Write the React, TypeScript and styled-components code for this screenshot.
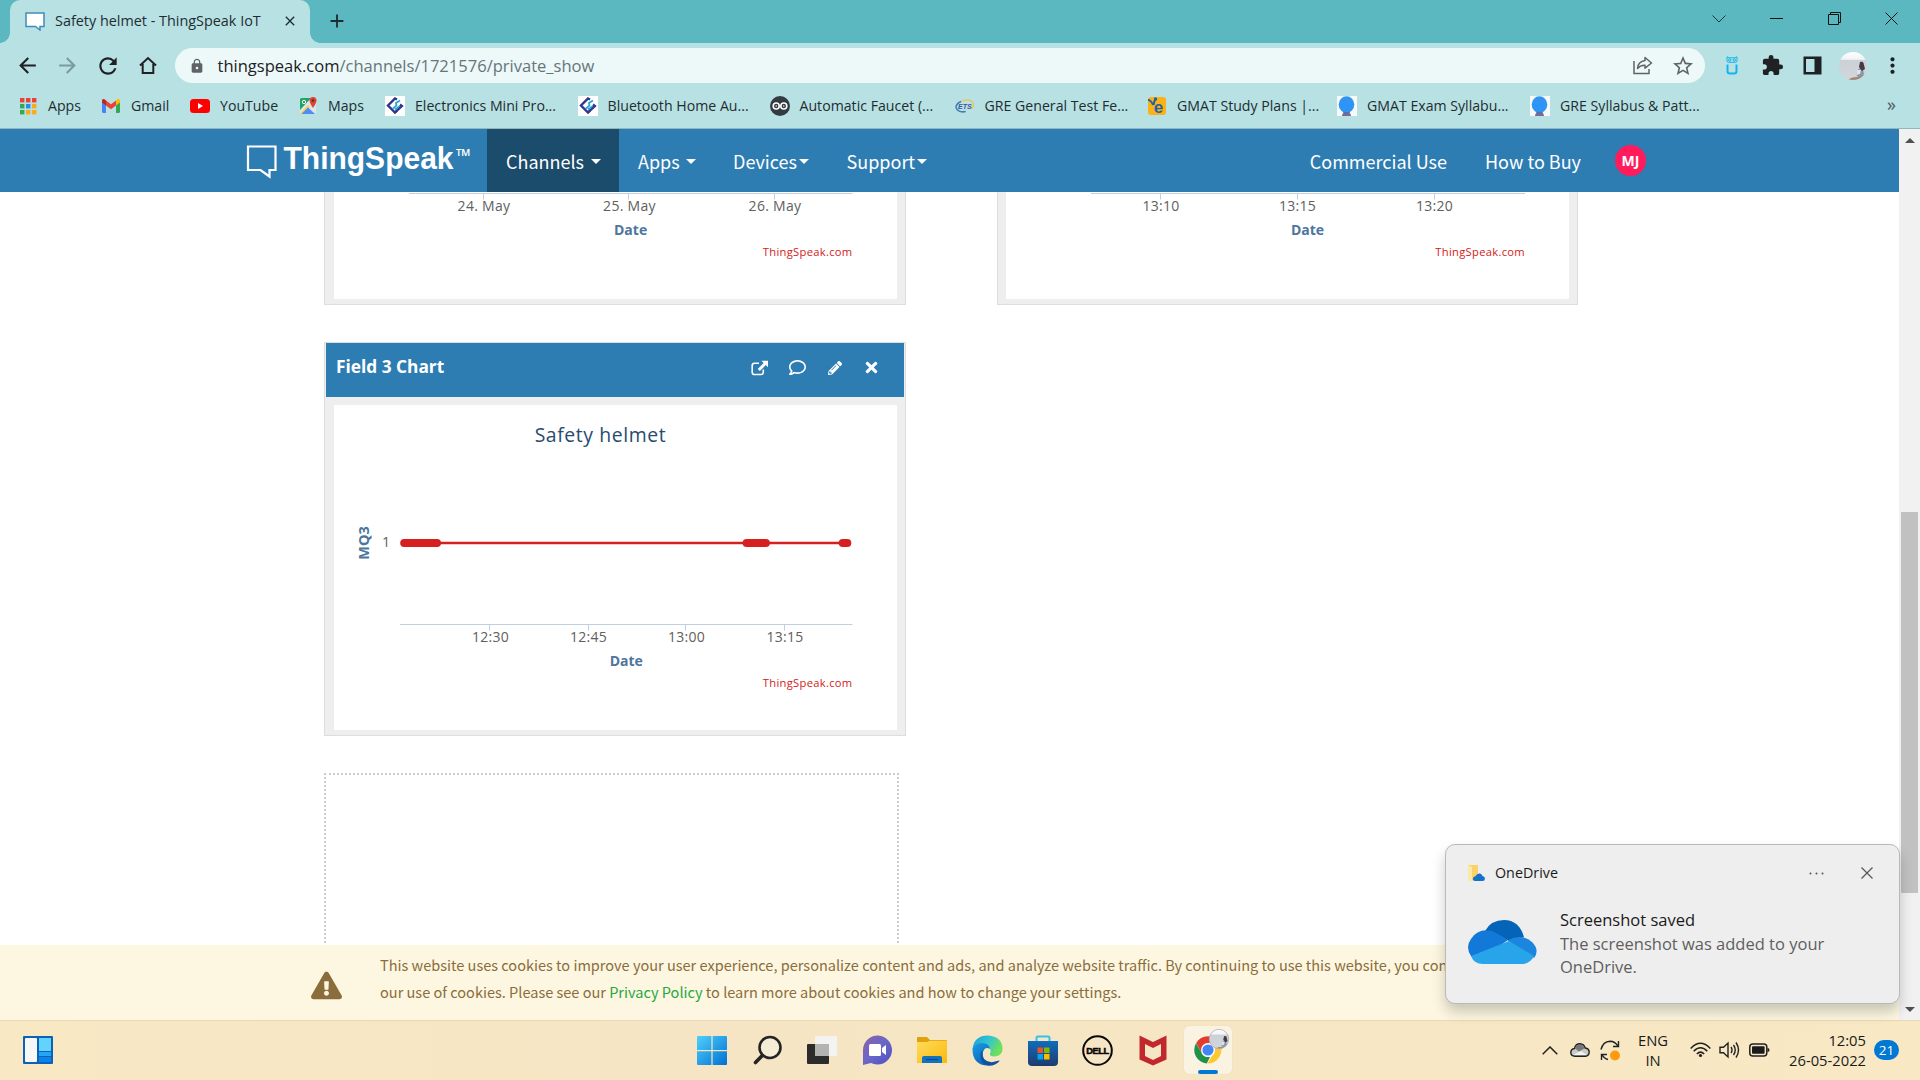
import React from "react";
import styled, { createGlobalStyle, css } from "styled-components";
import { MdArrowBack, MdArrowForward, MdExtension, MdLock, MdMoreVert, MdRefresh, MdStarBorder, MdClose, MdAdd } from "react-icons/md";
import { FaPencilAlt, FaRegComment, FaTimes, FaExclamationTriangle } from "react-icons/fa";

const ui = `"Segoe UI", "Open Sans", "Noto Sans", sans-serif`;
const site = `"Source Sans Pro", "Noto Sans CJK SC", sans-serif`;
const chartFont = `"Open Sans", "Noto Sans", sans-serif`;

const GlobalStyle = createGlobalStyle`
  * { box-sizing: border-box; }
  body { margin: 0; background: #fff; overflow: hidden; font-family: ${ui}; }
  svg { display: block; flex: none; }
`;

const Screen = styled.div`
  position: relative;
  display: flex;
  flex-direction: column;
  width: 1920px;
  height: 1080px;
  overflow: hidden;
`;

/* ---------- browser frame ---------- */

const TabStrip = styled.header`
  display: flex;
  align-items: flex-start;
  height: 43px;
  padding-left: 10px;
  background: #5bb8c1;
`;

const Tab = styled.div`
  position: relative;
  display: flex;
  align-items: center;
  width: 300px;
  height: 43px;
  padding: 0 12px 1px 15px;
  border-radius: 10px 10px 0 0;
  background: #b8e1e4;
  color: #1f2d30;
  &::before,
  &::after {
    content: "";
    position: absolute;
    bottom: 0;
    width: 10px;
    height: 10px;
  }
  &::before {
    left: -10px;
    background: radial-gradient(circle at 0 0, transparent 9.5px, #b8e1e4 10px);
  }
  &::after {
    right: -10px;
    background: radial-gradient(circle at 100% 0, transparent 9.5px, #b8e1e4 10px);
  }
`;

const TabTitle = styled.span`
  flex: 1;
  padding-left: 10px;
  font-size: 14.4px;
  line-height: 20px;
  white-space: nowrap;
`;

const NewTab = styled.div`
  display: flex;
  align-items: center;
  height: 42px;
  margin-left: 16px;
  color: #1c2d30;
`;

const WindowButtons = styled.div`
  display: flex;
  margin-left: auto;
  height: 37px;
`;

const WindowButton = styled.div`
  display: grid;
  place-items: center;
  width: 57.3px;
`;

const Toolbar = styled.div`
  display: flex;
  align-items: center;
  height: 45px;
  padding: 0 0 0 14px;
  background: #b8e1e4;
  color: #202124;
`;

const ToolButton = styled.div<{ $w: number; $faded?: boolean }>`
  display: grid;
  place-items: center;
  width: ${(p) => p.$w}px;
  ${(p) => p.$faded && css`color: #7c9a9e;`}
`;

const AddressBar = styled.div`
  display: flex;
  align-items: center;
  width: 1530px;
  height: 35px;
  margin-left: 1px;
  padding: 0 1px 0 14px;
  border-radius: 18px;
  background: #edf8f8;
  color: #5f6368;
`;

const Url = styled.span`
  flex: 1;
  padding-left: 12.5px;
  font-size: 16.55px;
  line-height: 24px;
  color: #66757a;
  b { font-weight: 400; color: #202124; }
`;

const Bookmarks = styled.nav`
  display: flex;
  align-items: center;
  height: 41px;
  padding: 0 24px 5px 18px;
  border-bottom: 1px solid #93b6b9;
  background: #b8e1e4;
`;

const Bookmark = styled.div<{ $w: number }>`
  display: flex;
  align-items: center;
  gap: 10px;
  flex: none;
  width: ${(p) => p.$w}px;
  font-size: 14.15px;
  line-height: 20px;
  white-space: nowrap;
  color: #1f2d30;
`;

const MoreBookmarks = styled.span`
  margin-left: auto;
  padding-bottom: 4px;
  font-size: 18px;
  line-height: 20px;
  color: #4a5b5e;
`;

/* ---------- web page ---------- */

const Viewport = styled.div`
  display: flex;
  height: 891px;
`;

const Page = styled.div`
  display: flex;
  flex-direction: column;
  width: 1899px;
  height: 891px;
  background: #fff;
`;

const NavBar = styled.nav`
  display: flex;
  align-items: stretch;
  height: 63px;
  padding-left: 245px;
  background: #2e7db2;
  color: #fff;
  font-family: ${site};
  font-size: 18px;
`;

const Brand = styled.div`
  display: flex;
  align-items: center;
  width: 242px;
`;

const NavItem = styled.div<{ $w: number; $gap?: number; $active?: boolean }>`
  display: flex;
  align-items: center;
  gap: ${(p) => p.$gap ?? 2}px;
  width: ${(p) => p.$w}px;
  padding-left: 19px;
  line-height: 26px;
  white-space: nowrap;
  background: ${(p) => (p.$active ? "#1c4c6b" : "transparent")};
`;

const Caret = styled.i`
  margin-top: 2px;
  border: 5px solid transparent;
  border-top-color: #fff;
  border-bottom: 0;
`;

const NavRight = styled.div`
  display: flex;
  align-items: center;
  margin-left: auto;
  padding-right: 253px;
`;

const NavLink = styled.span`
  margin-right: 38px;
  line-height: 26px;
  white-space: nowrap;
`;

const Initials = styled.span`
  display: grid;
  place-items: center;
  width: 31px;
  height: 31px;
  margin-left: -4px;
  border-radius: 50%;
  background: #ff1b5c;
  font: 700 14px/20px ${ui};
`;

const Content = styled.main`
  flex: 1;
  min-height: 0;
  overflow: hidden;
  padding-left: 324px;
`;

const CardRow = styled.div<{ $h?: number }>`
  display: flex;
  align-items: flex-end;
  gap: 91px;
  height: ${(p) => p.$h ?? 394}px;
  margin-bottom: 37px;
  overflow: hidden;
`;

const Card = styled.section<{ $w?: number }>`
  flex: none;
  display: flex;
  flex-direction: column;
  width: ${(p) => p.$w ?? 582}px;
  height: 394px;
  border: 1px solid #ddd;
  background: #eee;
`;

const CardHeader = styled.div`
  display: flex;
  align-items: center;
  height: 54px;
  margin: 0 1px;
  padding: 0 24px 5px 10px;
  background: #2e7db2;
  color: #fff;
`;

const CardTitle = styled.h3`
  flex: 1;
  margin: 0;
  padding-bottom: 1px;
  font: 700 17.3px/24px ${chartFont};
`;

const CardActions = styled.div`
  display: flex;
  align-items: center;
  gap: 21.5px;
`;

const ChartArea = styled.div<{ $left?: number }>`
  height: 325px;
  margin: 8px 8px 5px ${(p) => p.$left ?? 9}px;
  background: #fff;
`;

const DropZone = styled.div`
  width: 575px;
  height: 394px;
  border: 2px dotted #ccc;
`;

const CookieBar = styled.footer`
  display: flex;
  align-items: center;
  height: 75px;
  padding: 0 0 9px 312px;
  overflow: hidden;
  background: #fdf7e2;
  color: #8a6d3b;
  font: 14.54px/27px ${site};
`;

const CookieText = styled.p`
  margin: 0 0 0 37px;
  white-space: nowrap;
  a { color: #27a844; }
`;

const CookieMark = styled.div`
  margin: 14px 1px 0 -1px;
`;

const ScrollBar = styled.div`
  display: flex;
  flex-direction: column;
  align-items: center;
  justify-content: space-between;
  width: 21px;
  padding: 9px 0 8px;
  background: #f1f1f1;
`;

const ScrollTrack = styled.div`
  flex: 1;
  padding-top: 369px;
`;

const Thumb = styled.div`
  width: 17px;
  height: 381px;
  background: #c1c1c1;
`;

const Arrow = styled.i<{ $up?: boolean }>`
  border: 5px solid transparent;
  ${(p) => (p.$up ? "border-bottom-color: #505050; border-top: 0;" : "border-top-color: #505050; border-bottom: 0;")}
`;

/* ---------- notification ---------- */

const Toast = styled.aside`
  position: absolute;
  left: 1445px;
  top: 844px;
  width: 455px;
  height: 160px;
  padding: 16px 26px 0 22px;
  border: 1px solid #b9b9b5;
  border-radius: 10px;
  background: #eee;
  box-shadow: 0 8px 14px rgba(0, 0, 0, 0.2);
`;

const ToastHead = styled.div`
  display: flex;
  align-items: center;
  height: 24px;
  font-size: 14.3px;
  color: #1a1a1a;
`;

const ToastApp = styled.span`
  flex: 1;
  padding: 0 0 2px 10px;
`;

const ToastDots = styled.span`
  margin-right: 37px;
`;

const ToastBody = styled.div`
  display: flex;
  gap: 23px;
  margin-top: 23px;
  font-size: 16.5px;
  line-height: 23.6px;
  color: #5f5f5f;
  strong { display: block; font-weight: 400; color: #1a1a1a; }
`;

const CloudBox = styled.div`
  padding-top: 12px;
`;

/* ---------- taskbar ---------- */

const TaskBar = styled.footer`
  display: grid;
  grid-template-columns: 1fr auto 1fr;
  align-items: center;
  height: 60px;
  background: linear-gradient(90deg, #f8e8c4, #f5e5c4 35%, #f7e6c3 65%, #f8e8c4);
  box-shadow: inset 0 1px 0 #e8d8b6;
`;

const TaskLeft = styled.div`
  padding-left: 23px;
`;

const TaskApps = styled.div`
  display: flex;
`;

const TaskApp = styled.div<{ $active?: boolean }>`
  display: grid;
  place-items: center;
  width: 48px;
  height: 48px;
  margin: 0 3.6px;
  border-radius: 5px;
  ${(p) => p.$active && css`background: #fbf3e2; box-shadow: 0 0 1px #d9cba8;`}
`;

const Tray = styled.div`
  display: flex;
  align-items: center;
  justify-content: flex-end;
  padding-right: 21px;
  font-size: 14.75px;
  line-height: 20px;
  color: #1a1a1a;
`;

const TrayIcon = styled.div<{ $w?: number }>`
  display: grid;
  place-items: center;
  width: ${(p) => p.$w ?? 30}px;
`;

const Language = styled.div`
  width: 61px;
  padding-right: 5px;
  text-align: center;
`;

const Clock = styled.div`
  width: 92px;
  text-align: right;
`;

const Count = styled.span`
  display: grid;
  place-items: center;
  width: 25px;
  height: 20px;
  margin-left: 8px;
  border-radius: 10px;
  background: #0078d4;
  color: #fff;
  font-size: 13.5px;
`;

/* ---------- drawings ---------- */

const Favicon = () => (
  <svg width="20" height="19" viewBox="0 0 20 19">
    <path d="M1 1h18v13.500h-4v3.500l-4.500-3.500H1z" fill="#fff" stroke="#3f8cbd" strokeWidth="1.500" />
  </svg>
);

const Logo = () => (
  <svg width="230" height="40" viewBox="0 0 230 40">
    <path d="M3 5.500h27.500v23.500h-6v6.500l-9-6.500H3z" fill="none" stroke="#fff" strokeWidth="2.200" />
    <text x="38.500" y="28" textLength="170" lengthAdjust="spacingAndGlyphs" fill="#fff" fontFamily="Liberation Sans, Arial, sans-serif" fontWeight="700" fontSize="31.500">ThingSpeak</text>
    <text x="211" y="22" fill="#fff" fontFamily="Open Sans, sans-serif" fontSize="20">™</text>
  </svg>
);

const HomeIcon = () => (
  <svg width="18" height="19" viewBox="0 0 18 19" fill="none" stroke="currentColor" strokeWidth="2">
    <path d="M1 9.500 9 2l8 7.500M3.700 8v9h10.600V8" />
  </svg>
);

const ShareIcon = () => (
  <svg width="20" height="19" viewBox="0 0 20 19" fill="none" stroke="currentColor" strokeWidth="1.500">
    <path d="M1 5v12.500h15V13" />
    <path d="M12 1.500 18.500 7 12 12.200V9.300c-3.300-.2-5.600.8-7.500 3.200.4-4.500 3-7.300 7.500-7.900z" strokeLinejoin="round" />
  </svg>
);

const OwlIcon = () => (
  <svg width="12" height="19" viewBox="0 0 12 19" fill="none" stroke="#12b5ea" strokeWidth="1.600">
    <path d="M1.500 8.500V15q0 2.500 2.500 2.500h4q2.500 0 2.500-2.500V8.500" strokeWidth="2" />
    <path d="M1 .8l2 1h6l2-1v4q0 1.500-1.500 1.500h-7Q1 6.300 1 4.800z" strokeWidth="1" />
    <circle cx="3.700" cy="4" r="1.200" strokeWidth="1" /><circle cx="8.300" cy="4" r="1.200" strokeWidth="1" />
  </svg>
);

const SidePanelIcon = () => (
  <svg width="19" height="19" viewBox="0 0 19 19"><path fillRule="evenodd" d="M.5.500h18v18H.5zM3 3v13h8.500V3z" fill="#202124" /></svg>
);

const ProfilePhoto = ({ size }: { size: number }) => (
  <svg width={size} height={size} viewBox="0 0 28 28">
    <defs>
      <clipPath id="photo"><circle cx="14" cy="14" r="14" /></clipPath>
      <linearGradient id="sky" x2="0" y2="1"><stop stopColor="#fff" /><stop offset=".26" stopColor="#f2f3f5" /><stop offset=".3" stopColor="#ccd0d7" /><stop offset="1" stopColor="#d3d6dc" /></linearGradient>
    </defs>
    <g clipPath="url(#photo)">
      <rect width="28" height="28" fill="url(#sky)" />
      <path d="M9 28q3-3 9-3l10-4v9z" fill="#a3866e" />
      <path d="M17 23q0-5 4-7l3 2 1 4-5 3z" fill="#8795ad" />
      <path d="M21 10q2.500-1 3.500 1l1.500 6-3 2-3-4z" fill="#463a40" />
      <path d="M18 18l4 0-1 4-4 1z" fill="#dfe5ec" />
    </g>
  </svg>
);

const AppsGrid = () => (
  <svg width="20" height="20" viewBox="0 0 20 20">
    {["#ea4335", "#ea4335", "#ea4335", "#34a853", "#2b8cf0", "#fbab19", "#34a853", "#fbab19", "#fbab19"].map((c, i) => (
      <rect key={i} x={2 + (i % 3) * 6} y={2 + Math.floor(i / 3) * 6} width="4.400" height="4.400" fill={c} />
    ))}
  </svg>
);

const GmailIcon = () => (
  <svg width="20" height="20" viewBox="0 0 20 20">
    <path d="M1 5v10.500q0 1.500 1.500 1.500H5V8.500z" fill="#4285f4" />
    <path d="M19 5v10.500q0 1.500-1.500 1.500H15V8.500z" fill="#34a853" />
    <path d="M15 4.500V9.500l4-3V5q0-3-2.500-1.700z" fill="#fbbc04" />
    <path d="M1 5v1.500l4 3V4.500L3.500 3.300Q1 2 1 5z" fill="#c5221f" />
    <path d="M5 4.500v5l5 3.700 5-3.700v-5l-5 3.700z" fill="#ea4335" />
  </svg>
);

const YouTubeIcon = () => (
  <svg width="20" height="20" viewBox="0 0 20 20">
    <rect y="3" width="20" height="14" rx="3.500" fill="#f00" /><path d="M8 7v6l5-3z" fill="#fff" />
  </svg>
);

const MapsIcon = () => (
  <svg width="20" height="20" viewBox="0 0 20 20">
    <rect x="2" y="2" width="16" height="16" rx="1.500" fill="#dfe6ea" />
    <path d="M3.500 2H13L2 14V3.500Q2 2 3.500 2z" fill="#1fa463" />
    <path d="M2 17.500 10 9l2 2-8 7z" fill="#fdd049" />
    <path d="M3.500 18 10 11.500 17 18z" fill="#4c8df6" />
    <path d="M15 1q-3.500 0-3.500 3.600Q11.500 7 15 12q3.500-5 3.500-7.400Q18.500 1 15 1z" fill="#db4437" />
    <circle cx="15" cy="4.600" r="1.300" fill="#7b231e" />
    <circle cx="6" cy="6" r="1.700" fill="none" stroke="#fff" />
  </svg>
);

const ElectronicsIcon = () => (
  <svg width="20" height="20" viewBox="0 0 20 20">
    <rect width="20" height="20" fill="#fff" />
    <path d="M12 3.500 10 2.500 3 9.500l7 7 2.500-2.500" fill="none" stroke="#30368c" strokeWidth="2.400" />
    <path d="M8 12.500l3.500-3L11 7l4-2.500M10 13.500 15 10" fill="none" stroke="#27a9d5" strokeWidth="1.800" />
    <path d="M10 16.500 17 10l-2-1.500" fill="none" stroke="#30368c" strokeWidth="2.200" />
  </svg>
);

const ArduinoIcon = () => (
  <svg width="20" height="20" viewBox="0 0 20 20">
    <circle cx="10" cy="10" r="10" fill="#323b40" />
    <circle cx="6.200" cy="10" r="3" fill="none" stroke="#fff" strokeWidth="1.600" /><circle cx="13.800" cy="10" r="3" fill="none" stroke="#fff" strokeWidth="1.600" />
    <circle cx="6.200" cy="10" r=".8" fill="#fff" /><circle cx="13.800" cy="10" r=".8" fill="#fff" />
  </svg>
);

const EtsIcon = () => (
  <svg width="20" height="20" viewBox="0 0 20 20">
    <ellipse cx="10" cy="10.500" rx="9" ry="5.800" fill="#c3dde6" />
    <path d="M6 5.500Q16 1.500 18.500 8q.5 3-3 5" fill="none" stroke="#e5c65b" strokeWidth="1.300" />
    <path d="M6 5.500Q.5 8 1.200 12q2.500 5 9.500 3.500" fill="none" stroke="#3c80b5" strokeWidth="1.600" />
    <text x="9.800" y="13" fontSize="7" fontWeight="700" fontStyle="italic" textAnchor="middle" fill="#255e9b" fontFamily="Liberation Sans, sans-serif">ETS</text>
  </svg>
);

const StudyIcon = () => (
  <svg width="20" height="20" viewBox="0 0 20 20">
    <rect x="1" y="1" width="18" height="18" rx="3" fill="#fbb216" />
    <text x="11.500" y="16.500" fontSize="17" fontWeight="700" textAnchor="middle" fill="#1f62a8" fontFamily="Liberation Sans, sans-serif">e</text>
    <path d="M1 4q3 0 5 5M7 9q-1-3 2-6" stroke="#1f62a8" strokeWidth="1.800" fill="none" /><circle cx="8.500" cy="3" r="1.700" fill="#1f62a8" />
  </svg>
);

const GlobeIcon = () => (
  <svg width="20" height="20" viewBox="0 0 20 20">
    <rect width="20" height="20" fill="#f7f8f8" />
    <path d="M5 20q0-3.500 4.500-4 4.500.5 4.500 4z" fill="#796b93" />
    <ellipse cx="9.500" cy="8.500" rx="7.800" ry="8.200" fill="#2f95f5" /><path d="M5 15q5 2.500 9 0l-2 2.500H7z" fill="#4574b6" />
  </svg>
);

const OpenIcon = () => (
  <svg width="17" height="16" viewBox="0 0 17 16">
    <path d="M8 3.200H3.500Q1.200 3.200 1.200 5.500v6.700q0 2.300 2.300 2.300H10q2.300 0 2.300-2.300V9.500" fill="none" stroke="#fff" strokeWidth="1.600" />
    <path d="M10.500.800H17v6.500l-2.200-2.200-6 6L6.700 9l6-6z" fill="#fff" />
  </svg>
);

const OneDriveCloud = ({ w }: { w: number }) => (
  <svg width={w} height={w * 0.667} viewBox="0 0 69 46">
    <path d="M17 11Q23 0 36 0q15 0 20 17L42 21z" fill="#0364b8" />
    <path d="M3 36Q-3 27 3 19q7-11 21-8 5 2 16 9L20 34 4 37z" fill="#1379d8" />
    <path d="M40 20q14-7 24 2 8 8 2 16L40 21z" fill="#1c86df" />
    <path d="M3 36 41 21l25 15q-4 8-12 8H15Q6 44 3 36z" fill="#28a4ea" />
  </svg>
);

const FolderCloud = () => (
  <svg width="17" height="17" viewBox="0 0 17 17">
    <path d="M0 0h10v14l-7 2-3-1z" fill="#f8d36a" /><path d="M0 0l4 2v15l-4-2z" fill="#fde9a6" />
    <path d="M7 16q-2.500-.5-2-3 .5-1.700 2.500-1.800Q9 8 12 8.500q2 .5 2.600 2.500 2.400.5 2.400 2.500T15 16z" fill="#1272cc" />
  </svg>
);

const WidgetsIcon = () => (
  <svg width="30" height="28" viewBox="0 0 30 28">
    <rect width="30" height="28" rx="1" fill="#0d62b8" /><rect x="2" y="2" width="12" height="24" rx="1" fill="#f7f7f7" />
    <rect x="16" y="2" width="12" height="13" fill="#62d3fb" /><rect x="16" y="16" width="12" height="4" fill="#23a6f6" /><rect x="16" y="21" width="12" height="5" fill="#0a84e8" />
  </svg>
);

const WindowsIcon = () => (
  <svg width="30" height="30" viewBox="0 0 30 30">
    <defs><linearGradient id="win" x2="1" y2="1"><stop stopColor="#50d0fb" /><stop offset="1" stopColor="#0070d2" /></linearGradient></defs>
    <path d="M0 2q0-1 1-1h13.400v14H0zM15.600 1H29q1 0 1 1v13H15.600zM0 16.200h14.400V30H1q-1 0-1-1zM15.600 16.200H30V29q0 1-1 1H15.600z" fill="url(#win)" />
  </svg>
);

const SearchIcon = () => (
  <svg width="30" height="30" viewBox="0 0 30 30" fill="none" stroke="#252525">
    <circle cx="18" cy="12.500" r="10.500" strokeWidth="2.600" fill="#f5ecd6" /><path d="M10.300 20.500 3.500 27.500" strokeWidth="3.600" strokeLinecap="round" />
  </svg>
);

const TaskViewIcon = () => (
  <svg width="30" height="30" viewBox="0 0 30 30">
    <rect y="9" width="22" height="20" rx="1" fill="#2c2c2a" /><rect x="8" y="1" width="22" height="20" rx="1" fill="#f3f3f3" /><rect x="8" y="9" width="14" height="12" fill="#b3b3b1" />
  </svg>
);

const ChatIcon = () => (
  <svg width="30" height="30" viewBox="0 0 30 30">
    <defs><linearGradient id="chat" x2="1" y2="1"><stop stopColor="#8b64a8" /><stop offset=".5" stopColor="#6a66c8" /><stop offset="1" stopColor="#4f4fc4" /></linearGradient></defs>
    <path d="M1 30V15A14.500 14.500 0 1 1 9 28z" fill="url(#chat)" /><rect x="7" y="9" width="12" height="12" rx="1.500" fill="#fff" /><path d="M20 13l4-3v10l-4-3z" fill="#fff" />
  </svg>
);

const FolderIcon = () => (
  <svg width="30" height="30" viewBox="0 0 30 30">
    <defs><linearGradient id="fold" x2="1" y2="1"><stop stopColor="#ffdc5e" /><stop offset="1" stopColor="#fbb80c" /></linearGradient></defs>
    <path d="M0 3q0-1 1-1h9l3 3h16q1 0 1 1v5H0z" fill="#e2a10c" /><path d="M0 7h10l3-1.200h17v22.200H0z" fill="url(#fold)" />
    <path d="M5 28v-5q0-2 2-2h16q2 0 2 2v5z" fill="#1272bd" /><path d="M9 24.500h12" stroke="#0a4c8b" strokeWidth="1.200" />
  </svg>
);

const EdgeIcon = () => (
  <svg width="31" height="31" viewBox="0 0 31 31">
    <defs>
      <linearGradient id="edge" x2="1" y2=".4"><stop stopColor="#1b9fdd" /><stop offset=".55" stopColor="#32c5cf" /><stop offset="1" stopColor="#6fe05a" /></linearGradient>
      <linearGradient id="edge2" x2=".6" y2="1"><stop stopColor="#1b9ee4" /><stop offset="1" stopColor="#0a63be" /></linearGradient>
    </defs>
    <path d="M.5 14Q2 .5 16 .5q14 1 14.500 13 0 7-7.500 8-6 0-5-3 2-4-2-7Q8 8 .5 14z" fill="url(#edge)" />
    <path d="M.5 14Q3 8 10 8q7 0 8 6-5-3-7 3-1 8 6 13.400Q.5 31 .5 14z" fill="url(#edge2)" />
    <path d="M12 14q-4 5 0 10 5 5 13 2 3-1 2.500 0-4 5-11 4.800Q8 28 8.500 20 9 16 12 14z" fill="#124f9d" />
  </svg>
);

const StoreIcon = () => (
  <svg width="30" height="31" viewBox="0 0 30 31">
    <defs><linearGradient id="shop" x2="0" y2="1"><stop stopColor="#0f6cbd" /><stop offset="1" stopColor="#1f3b6d" /></linearGradient></defs>
    <path d="M8.500 7V3q0-1.500 1.500-1.500h10q1.500 0 1.500 1.500v4" fill="none" stroke="#2fc3ef" strokeWidth="2" />
    <path d="M0 6h30v21q0 4-4 4H4q-4 0-4-4z" fill="url(#shop)" />
    <path d="M9.500 12.500H15V18H9.500z" fill="#f25022" /><path d="M16 12.500h5.500V18H16z" fill="#7fba00" /><path d="M9.500 19H15v5.500H9.500z" fill="#00a4ef" /><path d="M16 19h5.500v5.500H16z" fill="#ffb900" />
  </svg>
);

const DellIcon = () => (
  <svg width="31" height="31" viewBox="0 0 31 31">
    <circle cx="15.500" cy="15.500" r="14.300" fill="none" stroke="#0a0a0a" strokeWidth="2" />
    <text x="15.500" y="18.800" fontSize="9.200" fontWeight="700" textAnchor="middle" letterSpacing="-.4" fontFamily="Liberation Sans, sans-serif" stroke="#0a0a0a" strokeWidth=".5">DELL</text>
  </svg>
);

const McAfeeIcon = () => (
  <svg width="28" height="31" viewBox="0 0 28 31">
    <path d="M.5.500 14 7 27.500.500v24L14 30.500.500 24.500zM6 9v12l8 4 8-4V9l-8 4z" fill="#c1282d" fillRule="evenodd" />
  </svg>
);

const ChromeIcon = () => (
  <svg width="48" height="48" viewBox="0 0 48 48">
    <path d="M12.200 17a13.500 13.500 0 0 1 23.400 0L24 17.300l-6.300 10z" fill="#e33b2e" />
    <path d="M35.600 17.200a13.500 13.500 0 0 1-12 20.200l6-10.500q2.400-5-.9-9.700z" fill="#fcc934" />
    <path d="M12 17.200l6 10.200q2.500 4.400 8 3.600l-3.200 6.400A13.500 13.500 0 0 1 12 17.200z" fill="#1f9247" />
    <circle cx="24" cy="24" r="7" fill="#fff" /><circle cx="24" cy="24" r="5.600" fill="#4285f4" />
    <svg x="25" y="3" width="20" height="21"><ProfilePhoto size={20} /></svg>
    <circle cx="35" cy="13" r="9.700" fill="none" stroke="#a9adb4" strokeWidth=".8" />
    <rect x="14" y="44" width="20" height="4" rx="2" fill="#0078d4" />
  </svg>
);

const SmallCloud = () => (
  <svg width="20" height="14" viewBox="0 0 20 14">
    <path d="M5 13.200Q.8 13 .8 9.500 1 6 4.500 5.500 5.500.8 10 .8q4 .2 5.200 4.200 4 .5 4 4.300-.2 3.700-3.700 3.900z" fill="#c9c9c6" stroke="#222" strokeWidth="1.400" />
    <path d="M5 5.500Q6 1.500 10 1.500q3.500.5 4.500 4L9 8.500z" fill="#777" /><path d="M3 12l8-4 6 4z" fill="#f3f3f3" />
  </svg>
);

const SyncIcon = () => (
  <svg width="21" height="21" viewBox="0 0 21 21" fill="none" stroke="#222" strokeWidth="1.400">
    <path d="M1 9.500Q3 1.500 10 1.200q5 0 8 5M18.500 1v5.500H13M8 19.500q-4-.8-6-5M1.500 20v-5.500H7" /><circle cx="15" cy="15.500" r="5" fill="#ff9a0c" stroke="none" />
  </svg>
);

const WifiIcon = () => (
  <svg width="21" height="16" viewBox="0 0 21 16" fill="none" stroke="#222" strokeWidth="1.500">
    <path d="M.7 6.500q9.800-10.500 19.600 0M3.700 9.300q6.800-7 13.600 0M6.800 12q3.700-3.700 7.400 0" /><circle cx="10.500" cy="13.500" r="1.600" fill="#222" stroke="none" />
  </svg>
);

const SoundIcon = () => (
  <svg width="21" height="18" viewBox="0 0 21 18" fill="none" stroke="#222" strokeWidth="1.400">
    <path d="M1 6.200h3.500L9 2v14l-4.500-4.200H1zM12 6q2 3 0 6M14.500 4q3.500 5 0 10M17 1.500q5 7.500 0 15" />
  </svg>
);

const BatteryIcon = () => (
  <svg width="21" height="14" viewBox="0 0 21 14">
    <rect x=".8" y="1" width="17" height="12" rx="3" fill="none" stroke="#222" strokeWidth="1.500" /><rect x="3" y="3.200" width="12.600" height="7.600" rx="1" fill="#1a1a1a" /><path d="M18.500 5q2 0 2 2t-2 2z" fill="#222" />
  </svg>
);

/* ---------- charts ---------- */

type Tick = { x: number; label: string; labelX: number };
type ChartProps = { from: number; to: number; ticks: Tick[]; dateX: number; series?: boolean };

const runs = [[66.200, 107], [408.600, 435.900], [504.700, 517.300]];

function Chart({ from, to, ticks, dateX, series }: ChartProps) {
  return (
    <svg width="563" height="325" viewBox="0 0 563 325" fontFamily={chartFont}>
      {series && (
        <>
          <text x="266.500" y="37" textAnchor="middle" fontSize="19.400" letterSpacing=".6" fill="#274b6d">Safety helmet</text>
          <text transform="translate(35 138) rotate(-90)" textAnchor="middle" fontSize="14.500" fontWeight="700" fill="#4d759e">MQ3</text>
          <text x="52" y="142" textAnchor="middle" fontSize="14.300" fill="#606060">1</text>
          <path d={`M70 138H${to - 3}`} stroke="#d62020" strokeWidth="2.500" />
          {runs.map(([a, b]) => (
            <path key={a} d={`M${a + 4} 138H${b - 4}`} stroke="#d62020" strokeWidth="8" strokeLinecap="round" />
          ))}
        </>
      )}
      <path d={`M${from} 219.500H${to}`} stroke="#c0d0e0" />
      {ticks.map((t) => (
        <g key={t.label}>
          <path d={`M${t.x} 219.500v6`} stroke="#c0d0e0" />
          <text x={t.labelX} y="237" textAnchor="middle" fontSize="14" letterSpacing=".3" fill="#606060">{t.label}</text>
        </g>
      ))}
      <text x={dateX} y="261" textAnchor="middle" fontSize="14" fontWeight="700" fill="#4d759e">Date</text>
      <text x={to} y="282" textAnchor="end" fontSize="11.200" letterSpacing=".3" fill="#d62020">ThingSpeak.com</text>
    </svg>
  );
}

const bookmarks: [string, number, React.ReactNode][] = [
  ["Apps", 83, <AppsGrid />],
  ["Gmail", 89, <GmailIcon />],
  ["YouTube", 108, <YouTubeIcon />],
  ["Maps", 87, <MapsIcon />],
  ["Electronics Mini Pro...", 192.5, <ElectronicsIcon />],
  ["Bluetooth Home Au...", 192, <ElectronicsIcon />],
  ["Automatic Faucet (...", 185, <ArduinoIcon />],
  ["GRE General Test Fe...", 192.5, <EtsIcon />],
  ["GMAT Study Plans |...", 190, <StudyIcon />],
  ["GMAT Exam Syllabu...", 193, <GlobeIcon />],
  ["GRE Syllabus & Patt...", 180, <GlobeIcon />],
];

export default function App() {
  return (
    <Screen>
      <GlobalStyle />
      <TabStrip>
        <Tab>
          <Favicon />
          <TabTitle>Safety helmet - ThingSpeak IoT</TabTitle>
          <MdClose size={16} />
        </Tab>
        <NewTab><MdAdd size={22} /></NewTab>
        <WindowButtons>
          <WindowButton><svg width="14" height="8" viewBox="0 0 14 8"><path d="M.5.500 7 7l6.500-6.500" fill="none" stroke="#16383c" /></svg></WindowButton>
          <WindowButton><svg width="13" height="1"><rect width="13" height="1" fill="#111" /></svg></WindowButton>
          <WindowButton><svg width="13" height="13" fill="none" stroke="#111"><path d="M.5 2.500h10v10H.5zM2.500 2.500v-2h10v10h-2" /></svg></WindowButton>
          <WindowButton><svg width="13" height="13" fill="none" stroke="#111"><path d="M.5.500l12 12M12.500.500l-12 12" /></svg></WindowButton>
        </WindowButtons>
      </TabStrip>
      <Toolbar>
        <ToolButton $w={26}><MdArrowBack size={25} /></ToolButton>
        <ToolButton $w={54} $faded><MdArrowForward size={25} /></ToolButton>
        <ToolButton $w={27}><MdRefresh size={26} /></ToolButton>
        <ToolButton $w={53}><HomeIcon /></ToolButton>
        <AddressBar>
          <MdLock size={16} />
          <Url><b>thingspeak.com</b>/channels/1721576/private_show</Url>
          <ToolButton $w={38}><ShareIcon /></ToolButton>
          <ToolButton $w={42}><MdStarBorder size={24} /></ToolButton>
        </AddressBar>
        <ToolButton $w={54}><OwlIcon /></ToolButton>
        <ToolButton $w={27}><MdExtension size={23} /></ToolButton>
        <ToolButton $w={53}><SidePanelIcon /></ToolButton>
        <ToolButton $w={28}><ProfilePhoto size={28} /></ToolButton>
        <ToolButton $w={50}><MdMoreVert size={25} /></ToolButton>
      </Toolbar>
      <Bookmarks>
        {bookmarks.map(([label, w, icon]) => (
          <Bookmark key={label} $w={w}>{icon}{label}</Bookmark>
        ))}
        <MoreBookmarks>»</MoreBookmarks>
      </Bookmarks>
      <Viewport>
        <Page>
          <NavBar>
            <Brand><Logo /></Brand>
            <NavItem $w={132} $gap={7} $active>Channels<Caret /></NavItem>
            <NavItem $w={95} $gap={6}>Apps<Caret /></NavItem>
            <NavItem $w={113.5}>Devices<Caret /></NavItem>
            <NavItem $w={118}>Support<Caret /></NavItem>
            <NavRight>
              <NavLink>Commercial Use</NavLink>
              <NavLink>How to Buy</NavLink>
              <Initials>MJ</Initials>
            </NavRight>
          </NavBar>
          <Content>
            <CardRow $h={113}>
              <Card>
                <CardHeader />
                <ChartArea>
                  <Chart from={75} to={518.500} dateX={296.600} ticks={[
                    { x: 149.500, label: "24. May", labelX: 150 },
                    { x: 294.500, label: "25. May", labelX: 295.500 },
                    { x: 440.500, label: "26. May", labelX: 441 },
                  ]} />
                </ChartArea>
              </Card>
              <Card $w={581}>
                <CardHeader />
                <ChartArea $left={8}>
                  <Chart from={85} to={519} dateX={301.500} ticks={[
                    { x: 154.500, label: "13:10", labelX: 155 },
                    { x: 291.500, label: "13:15", labelX: 291.500 },
                    { x: 428.500, label: "13:20", labelX: 428.500 },
                  ]} />
                </ChartArea>
              </Card>
            </CardRow>
            <CardRow>
              <Card>
                <CardHeader>
                  <CardTitle>Field 3 Chart</CardTitle>
                  <CardActions>
                    <OpenIcon />
                    <FaRegComment size={17} />
                    <FaPencilAlt size={14} />
                    <FaTimes size={17} />
                  </CardActions>
                </CardHeader>
                <ChartArea>
                  <Chart series from={66} to={518.500} dateX={292.300} ticks={[
                    { x: 155.500, label: "12:30", labelX: 156.500 },
                    { x: 254.500, label: "12:45", labelX: 254.500 },
                    { x: 351.500, label: "13:00", labelX: 352.500 },
                    { x: 450.500, label: "13:15", labelX: 451 },
                  ]} />
                </ChartArea>
              </Card>
            </CardRow>
            <DropZone />
          </Content>
          <CookieBar>
            <CookieMark><FaExclamationTriangle size={31} /></CookieMark>
            <CookieText>
              This website uses cookies to improve your user experience, personalize content and ads, and analyze website traffic. By continuing to use this website, you consent to
              <br />
              our use of cookies. Please see our <a>Privacy Policy</a> to learn more about cookies and how to change your settings.
            </CookieText>
          </CookieBar>
        </Page>
        <ScrollBar>
          <Arrow $up />
          <ScrollTrack><Thumb /></ScrollTrack>
          <Arrow />
        </ScrollBar>
      </Viewport>
      <TaskBar>
        <TaskLeft><WidgetsIcon /></TaskLeft>
        <TaskApps>
          <TaskApp><WindowsIcon /></TaskApp>
          <TaskApp><SearchIcon /></TaskApp>
          <TaskApp><TaskViewIcon /></TaskApp>
          <TaskApp><ChatIcon /></TaskApp>
          <TaskApp><FolderIcon /></TaskApp>
          <TaskApp><EdgeIcon /></TaskApp>
          <TaskApp><StoreIcon /></TaskApp>
          <TaskApp><DellIcon /></TaskApp>
          <TaskApp><McAfeeIcon /></TaskApp>
          <TaskApp $active><ChromeIcon /></TaskApp>
        </TaskApps>
        <Tray>
          <TrayIcon><svg width="16" height="9" viewBox="0 0 16 9"><path d="M.7 8.300 8 1l7.300 7.300" fill="none" stroke="#222" strokeWidth="1.500" /></svg></TrayIcon>
          <TrayIcon><SmallCloud /></TrayIcon>
          <TrayIcon><SyncIcon /></TrayIcon>
          <Language>ENG<br />IN</Language>
          <TrayIcon $w={28}><WifiIcon /></TrayIcon>
          <TrayIcon><SoundIcon /></TrayIcon>
          <TrayIcon><BatteryIcon /></TrayIcon>
          <Clock>12:05<br />26-05-2022</Clock>
          <Count>21</Count>
        </Tray>
      </TaskBar>
      <Toast>
        <ToastHead>
          <FolderCloud />
          <ToastApp>OneDrive</ToastApp>
          <ToastDots><svg width="15" height="3" fill="#555"><circle cx="1.500" cy="1.500" r="1" /><circle cx="7.500" cy="1.500" r="1" /><circle cx="13.500" cy="1.500" r="1" /></svg></ToastDots>
          <svg width="12" height="12" stroke="#555" strokeWidth="1.200"><path d="M.5.500l11 11M11.500.500l-11 11" /></svg>
        </ToastHead>
        <ToastBody>
          <CloudBox><OneDriveCloud w={69} /></CloudBox>
          <div>
            <strong>Screenshot saved</strong>
            The screenshot was added to your<br />OneDrive.
          </div>
        </ToastBody>
      </Toast>
    </Screen>
  );
}
